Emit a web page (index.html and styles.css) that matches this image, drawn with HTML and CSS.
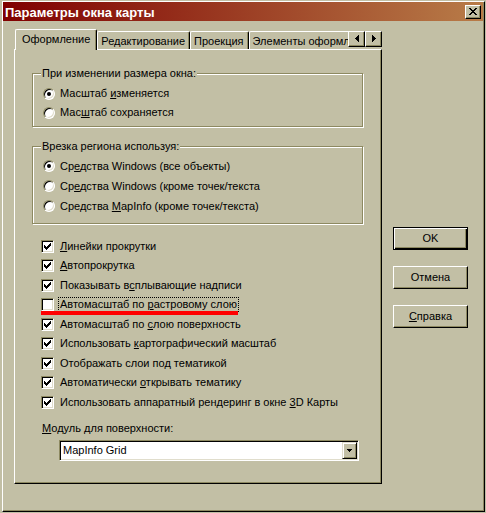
FILE: index.html
```html
<!DOCTYPE html>
<html lang="ru">
<head>
<meta charset="utf-8">
<title>Параметры окна карты</title>
<link rel="stylesheet" href="styles.css">
</head>
<body>
<div class="window">
  <div class="frame">
    <div class="frame-in">
      <div class="titlebar">
        <span class="title">Параметры окна карты</span>
        <button class="close" aria-label="Закрыть">
          <svg width="8" height="7" viewBox="0 0 8 7" shape-rendering="crispEdges"><path d="M0 0h2v1h-2z M6 0h2v1h-2z M1 1h2v1h-2z M5 1h2v1h-2z M2 2h4v1h-4z M3 3h2v1h-2z M2 4h4v1h-4z M1 5h2v1h-2z M5 5h2v1h-2z M0 6h2v1h-2z M6 6h2v1h-2z"/></svg>
        </button>
      </div>
      <div class="client">
        <div class="tabctl">
          <div class="tabstrip">
            <div class="tabs">
              <div class="tab active">Оформление</div>
              <div class="tab">Редактирование</div>
              <div class="tab">Проекция</div>
              <div class="tab">Элементы оформления</div>
            </div>
            <div class="spin">
              <button class="spin-btn" aria-label="Назад"><svg width="4" height="7" viewBox="0 0 4 7" shape-rendering="crispEdges"><path d="M0 3h1v1h-1z M1 2h1v3h-1z M2 1h1v5h-1z M3 0h1v7h-1z"/></svg></button>
              <button class="spin-btn" aria-label="Вперёд"><svg width="4" height="7" viewBox="0 0 4 7" shape-rendering="crispEdges"><path d="M3 3h1v1h-1z M2 2h1v3h-1z M1 1h1v5h-1z M0 0h1v7h-1z"/></svg></button>
            </div>
          </div>
          <div class="panel">
            <fieldset class="group g1">
              <legend>При изменении размера окна:</legend>
              <div class="opt"><span class="radio on"></span><span class="lbl">Масштаб <u>и</u>зменяется</span></div>
              <div class="opt"><span class="radio"></span><span class="lbl">Мас<u>ш</u>таб сохраняется</span></div>
            </fieldset>
            <fieldset class="group g2">
              <legend>Врезка региона используя:</legend>
              <div class="opt"><span class="radio on"></span><span class="lbl">Ср<u>е</u>дства Windows (все объекты)</span></div>
              <div class="opt"><span class="radio"></span><span class="lbl">Ср<u>е</u>дства Windows (кроме точек/текста</span></div>
              <div class="opt"><span class="radio"></span><span class="lbl">Средства <u>M</u>apInfo (кроме точек/текста)</span></div>
            </fieldset>
            <div class="checks">
              <div class="opt"><span class="check on"><svg width="7" height="7" viewBox="0 0 7 7" shape-rendering="crispEdges"><path d="M0 2h1v3h-1z M1 3h1v3h-1z M2 4h1v3h-1z M3 3h1v3h-1z M4 2h1v3h-1z M5 1h1v3h-1z M6 0h1v3h-1z"/></svg></span><span class="lbl"><u>Л</u>инейки прокрутки</span></div>
              <div class="opt"><span class="check on"><svg width="7" height="7" viewBox="0 0 7 7" shape-rendering="crispEdges"><path d="M0 2h1v3h-1z M1 3h1v3h-1z M2 4h1v3h-1z M3 3h1v3h-1z M4 2h1v3h-1z M5 1h1v3h-1z M6 0h1v3h-1z"/></svg></span><span class="lbl"><u>А</u>втопрокрутка</span></div>
              <div class="opt"><span class="check on"><svg width="7" height="7" viewBox="0 0 7 7" shape-rendering="crispEdges"><path d="M0 2h1v3h-1z M1 3h1v3h-1z M2 4h1v3h-1z M3 3h1v3h-1z M4 2h1v3h-1z M5 1h1v3h-1z M6 0h1v3h-1z"/></svg></span><span class="lbl">Показывать в<u>с</u>плывающие надписи</span></div>
              <div class="opt marked"><span class="check"></span><span class="lbl focus">Автомасштаб по <u>р</u>астровому слою</span><span class="redline"></span></div>
              <div class="opt"><span class="check on"><svg width="7" height="7" viewBox="0 0 7 7" shape-rendering="crispEdges"><path d="M0 2h1v3h-1z M1 3h1v3h-1z M2 4h1v3h-1z M3 3h1v3h-1z M4 2h1v3h-1z M5 1h1v3h-1z M6 0h1v3h-1z"/></svg></span><span class="lbl">Автомасштаб по <u>с</u>лою поверхность</span></div>
              <div class="opt"><span class="check on"><svg width="7" height="7" viewBox="0 0 7 7" shape-rendering="crispEdges"><path d="M0 2h1v3h-1z M1 3h1v3h-1z M2 4h1v3h-1z M3 3h1v3h-1z M4 2h1v3h-1z M5 1h1v3h-1z M6 0h1v3h-1z"/></svg></span><span class="lbl">Использовать <u>к</u>артографический масштаб</span></div>
              <div class="opt"><span class="check on"><svg width="7" height="7" viewBox="0 0 7 7" shape-rendering="crispEdges"><path d="M0 2h1v3h-1z M1 3h1v3h-1z M2 4h1v3h-1z M3 3h1v3h-1z M4 2h1v3h-1z M5 1h1v3h-1z M6 0h1v3h-1z"/></svg></span><span class="lbl">Отображать слои по<u>д</u> тематикой</span></div>
              <div class="opt"><span class="check on"><svg width="7" height="7" viewBox="0 0 7 7" shape-rendering="crispEdges"><path d="M0 2h1v3h-1z M1 3h1v3h-1z M2 4h1v3h-1z M3 3h1v3h-1z M4 2h1v3h-1z M5 1h1v3h-1z M6 0h1v3h-1z"/></svg></span><span class="lbl">Автоматически <u>о</u>ткрывать тематику</span></div>
              <div class="opt"><span class="check on"><svg width="7" height="7" viewBox="0 0 7 7" shape-rendering="crispEdges"><path d="M0 2h1v3h-1z M1 3h1v3h-1z M2 4h1v3h-1z M3 3h1v3h-1z M4 2h1v3h-1z M5 1h1v3h-1z M6 0h1v3h-1z"/></svg></span><span class="lbl">Использовать аппаратный рендеринг в окне <u>3</u>D Карты</span></div>
            </div>
            <div class="module">
              <div class="module-label"><u>М</u>одуль для поверхности:</div>
              <div class="combo">
                <span class="combo-text">MapInfo Grid</span>
                <span class="combo-btn"><svg width="5" height="3" viewBox="0 0 5 3" shape-rendering="crispEdges"><path d="M0 0h5v1h-5z M1 1h3v1h-3z M2 2h1v1h-1z"/></svg></span>
              </div>
            </div>
          </div>
        </div>
        <div class="buttons">
          <button class="btn default">OK</button>
          <button class="btn">Отмена</button>
          <button class="btn"><u>С</u>правка</button>
        </div>
      </div>
    </div>
  </div>
</div>
</body>
</html>
```

FILE: styles.css
```css
* { box-sizing: border-box; }

html, body {
  margin: 0;
  padding: 0;
  background: #c2bfa5;
}

body {
  font-family: "Liberation Sans", Arial, sans-serif;
  font-size: 11px;
  color: #000;
}

button {
  font: inherit;
  color: #000;
  margin: 0;
  padding: 0;
  background: #c2bfa5;
}

.window {
  width: 486px;
  height: 513px;
  padding: 1px 1px 1px 2px;
  background: #c2bfa5;
}

.frame {
  height: 100%;
  border: 1px solid;
  border-color: #fff #000 #000 #fff;
}

.frame-in {
  height: 100%;
  border-right: 1px solid #8d8961;
  border-bottom: 1px solid #8d8961;
}

.titlebar {
  height: 19px;
  display: flex;
  align-items: flex-start;
  justify-content: space-between;
  background: linear-gradient(to right, #800000, #b87c48);
  padding: 0 2px 0 2px;
}

.title {
  color: #fff;
  font-weight: bold;
  font-size: 13px;
  line-height: 17px;
  padding-top: 2px;
  white-space: nowrap;
}

.close {
  width: 16px;
  height: 14px;
  margin-top: 3px;
  border: 1px solid;
  border-color: #fff #000 #000 #fff;
  box-shadow: inset -1px -1px 0 #8d8961;
  display: flex;
  align-items: center;
  justify-content: center;
}

.close svg { display: block; margin-left: -1px; margin-top: -1px; }

.client {
  display: flex;
  align-items: flex-start;
  padding: 8px 0 0 11px;
}

.tabctl {
  width: 368px;
  flex: none;
}

.tabstrip {
  display: flex;
  height: 21px;
  position: relative;
  z-index: 1;
}

.tabs {
  flex: 1;
  display: flex;
  align-items: flex-start;
  overflow: hidden;
  padding-left: 1px;
}

.tab {
  flex: none;
  height: 18px;
  margin-top: 2px;
  border: 1px solid;
  border-bottom: 0;
  border-color: #fff #000 #000 #fff;
  border-radius: 2px 2px 0 0;
  box-shadow: inset -1px 0 0 #8d8961;
  padding: 3px 4px 0 3px;
  line-height: 13px;
  white-space: nowrap;
}

.tab.active {
  height: 21px;
  margin-top: 0;
  background: #c2bfa5;
  padding: 3px 6px 0 6px;
}

.spin {
  display: flex;
  margin-top: 2px;
}

.spin-btn {
  width: 17px;
  height: 16px;
  border: 1px solid;
  border-color: #fff #000 #000 #fff;
  box-shadow: inset -1px -1px 0 #8d8961;
  display: flex;
  align-items: center;
  justify-content: center;
}

.spin-btn svg { display: block; margin-top: -1px; }

.panel {
  margin-top: -1px;
  height: 435px;
  border: 1px solid;
  border-color: #fff #000 #000 #fff;
  box-shadow: inset -1px -1px 0 #8d8961;
  padding: 17px 0 0 17px;
}

.group {
  width: 331px;
  margin: 0;
  padding: 4px 0 4px 10px;
  border: 1px solid #8d8961;
  box-shadow: 1px 1px 0 #fff, inset 1px 1px 0 #fff;
  min-width: 0;
}

.group legend {
  margin-left: -2px;
  padding: 0 1px;
  line-height: 13px;
  background: #c2bfa5;
}

.g1 .opt { height: 19px; }

.g2 {
  margin-top: 13px;
  padding: 3px 0 7px 10px;
}

.g2 .opt { height: 20px; }

.opt {
  display: flex;
  align-items: center;
  white-space: nowrap;
}

.lbl {
  border: 1px solid transparent;
  padding: 0 1px;
  line-height: 13px;
}

.lbl.focus { border: 1px dotted #000; }

.radio {
  flex: none;
  width: 12px;
  height: 12px;
  margin-right: 3px;
  border-radius: 50%;
  border: 1px solid;
  border-color: #8d8961 #fff #fff #8d8961;
  box-shadow: inset 1px 1px 0 #000, inset -1px -1px 0 #e0ddcc;
  background: #fff;
  display: flex;
  align-items: center;
  justify-content: center;
}

.radio.on::after {
  content: "";
  width: 4px;
  height: 4px;
  border-radius: 50%;
  background: #000;
}

.checks {
  margin: 12px 0 0 9px;
}

.checks .opt { height: 20px; }
.checks .opt:nth-child(even) { height: 19px; }

.marked { position: relative; }

.redline {
  position: absolute;
  left: 0;
  top: 16px;
  width: 197px;
  height: 4px;
  background: #ff0000;
}

.check {
  flex: none;
  width: 13px;
  height: 13px;
  margin-right: 4px;
  border: 1px solid;
  border-color: #8d8961 #fff #fff #8d8961;
  box-shadow: inset 1px 1px 0 #000, inset -1px -1px 0 #e0ddcc;
  background: #fff;
  padding: 2px 0 0 2px;
}

.check svg { display: block; }

.module {
  margin: 10px 0 0 10px;
}

.module-label {
  line-height: 13px;
}

.combo {
  margin: 5px 0 0 17px;
  width: 300px;
  height: 21px;
  display: flex;
  align-items: stretch;
  border: 1px solid;
  border-color: #8d8961 #fff #fff #8d8961;
  box-shadow: inset 1px 1px 0 #000, inset -1px -1px 0 #e0ddcc;
  background: #fff;
  padding: 1px;
}

.combo-text {
  flex: 1;
  padding: 1px 0 0 2px;
  line-height: 15px;
}

.combo-btn {
  width: 15px;
  border: 1px solid;
  border-color: #e0ddcc #000 #000 #e0ddcc;
  box-shadow: inset 1px 1px 0 #fff, inset -1px -1px 0 #8d8961;
  background: #c2bfa5;
  display: flex;
  align-items: center;
  justify-content: center;
}

.combo-btn svg { display: block; }

.buttons {
  display: flex;
  flex-direction: column;
  gap: 16px;
  margin: 198px 0 0 11px;
}

.btn {
  width: 75px;
  height: 23px;
  border: 1px solid;
  border-color: #fff #000 #000 #fff;
  box-shadow: inset -1px -1px 0 #8d8961;
  line-height: 13px;
}

.btn.default {
  border-color: #000;
  box-shadow: inset 1px 1px 0 #fff, inset -1px -1px 0 #000, inset -2px -2px 0 #8d8961;
}
```
